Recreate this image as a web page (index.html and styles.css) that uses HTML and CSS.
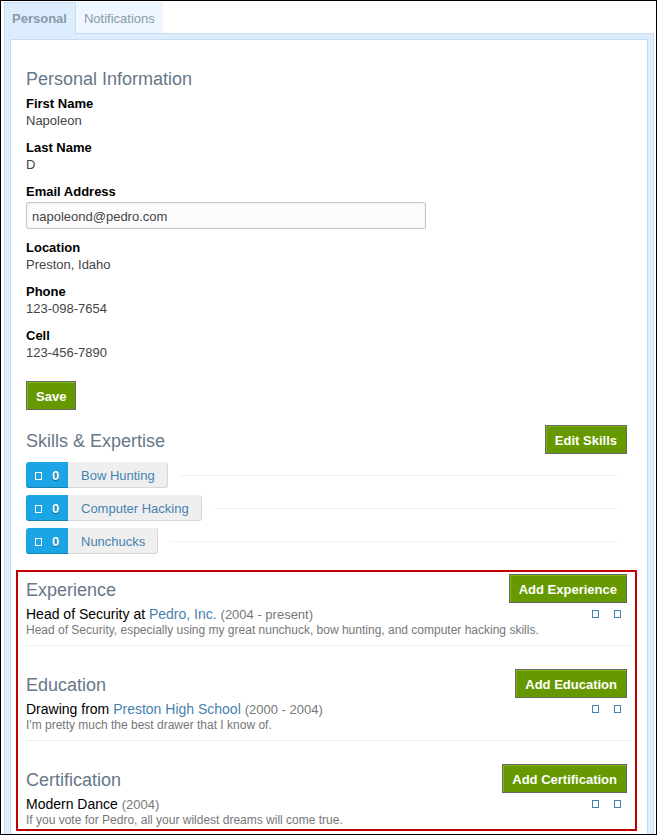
FILE: index.html
```html
<!DOCTYPE html>
<html lang="en">
<head>
<meta charset="utf-8">
<title>Personal profile</title>
<link rel="stylesheet" href="styles.css">
</head>
<body>
<div class="page">
  <nav class="tabs">
    <a class="tab tab-active" href="#personal">Personal</a>
    <a class="tab" href="#notifications">Notifications</a>
  </nav>
  <main class="frame">
    <div class="panel">
      <form class="info">
        <h2>Personal Information</h2>
        <dl class="field"><dt>First Name</dt><dd>Napoleon</dd></dl>
        <dl class="field"><dt>Last Name</dt><dd>D</dd></dl>
        <div class="field">
          <label for="email">Email Address</label>
          <input id="email" type="text" value="napoleond@pedro.com">
        </div>
        <dl class="field"><dt>Location</dt><dd>Preston, Idaho</dd></dl>
        <dl class="field"><dt>Phone</dt><dd>123-098-7654</dd></dl>
        <dl class="field"><dt>Cell</dt><dd>123-456-7890</dd></dl>
        <button class="btn save" type="button">Save</button>
      </form>

      <section class="skills">
        <header class="head"><h2>Skills &amp; Expertise</h2><button class="btn" type="button">Edit Skills</button></header>
        <ul class="skill-list">
          <li class="skill"><span class="count"><svg class="glyph" viewBox="0 0 7 8"><rect x=".5" y=".5" width="6" height="7"/></svg>0</span><a class="skill-name" href="#bow">Bow Hunting</a></li>
          <li class="skill"><span class="count"><svg class="glyph" viewBox="0 0 7 8"><rect x=".5" y=".5" width="6" height="7"/></svg>0</span><a class="skill-name" href="#hacking">Computer Hacking</a></li>
          <li class="skill"><span class="count"><svg class="glyph" viewBox="0 0 7 8"><rect x=".5" y=".5" width="6" height="7"/></svg>0</span><a class="skill-name" href="#nunchucks">Nunchucks</a></li>
        </ul>
      </section>

      <div class="history">
        <section class="entry">
          <header class="head"><h2>Experience</h2><button class="btn" type="button">Add Experience</button></header>
          <div class="row">
            <h3>Head of Security at <a href="#pedro">Pedro, Inc.</a> <small>(2004 - present)</small></h3>
            <button class="tool" type="button" aria-label="Edit"><svg class="glyph" viewBox="0 0 7 8"><rect x=".5" y=".5" width="6" height="7"/></svg></button>
            <button class="tool" type="button" aria-label="Delete"><svg class="glyph" viewBox="0 0 7 8"><rect x=".5" y=".5" width="6" height="7"/></svg></button>
          </div>
          <p>Head of Security, especially using my great nunchuck, bow hunting, and computer hacking skills.</p>
        </section>
        <section class="entry">
          <header class="head"><h2>Education</h2><button class="btn" type="button">Add Education</button></header>
          <div class="row">
            <h3>Drawing from <a href="#school">Preston High School</a> <small>(2000 - 2004)</small></h3>
            <button class="tool" type="button" aria-label="Edit"><svg class="glyph" viewBox="0 0 7 8"><rect x=".5" y=".5" width="6" height="7"/></svg></button>
            <button class="tool" type="button" aria-label="Delete"><svg class="glyph" viewBox="0 0 7 8"><rect x=".5" y=".5" width="6" height="7"/></svg></button>
          </div>
          <p>I'm pretty much the best drawer that I know of.</p>
        </section>
        <section class="entry">
          <header class="head"><h2>Certification</h2><button class="btn" type="button">Add Certification</button></header>
          <div class="row">
            <h3>Modern Dance <small>(2004)</small></h3>
            <button class="tool" type="button" aria-label="Edit"><svg class="glyph" viewBox="0 0 7 8"><rect x=".5" y=".5" width="6" height="7"/></svg></button>
            <button class="tool" type="button" aria-label="Delete"><svg class="glyph" viewBox="0 0 7 8"><rect x=".5" y=".5" width="6" height="7"/></svg></button>
          </div>
          <p>If you vote for Pedro, all your wildest dreams will come true.</p>
        </section>
      </div>
    </div>
  </main>
</div>
</body>
</html>
```
FILE: styles.css
```css
* { box-sizing: border-box; }
body {
  margin: 0;
  background: #fff;
  color: #444;
  font: 13px/17px "Liberation Sans", Arial, sans-serif;
}
h2, h3, p, dl, dd, ul { margin: 0; padding: 0; font-weight: normal; }
a { color: #4682b0; text-decoration: none; }
button { font: inherit; cursor: pointer; }

.page { border: 1px solid #000; padding: 1px 2px 0 3px; }

.tabs { display: flex; }
.tab {
  padding: 8px 8px 6px;
  background: #eef7ff;
  color: #8899a8;
}
.tab-active {
  position: relative;
  margin-bottom: -1px;
  padding: 7px 8px 7px 7px;
  border: 1px solid #c8dcf0;
  border-bottom: 0;
  background: #dcedfe;
  font-weight: bold;
}

.frame {
  padding: 5px 5px 0;
  border: 1px solid #c8dcf0;
  border-bottom: 0;
  background: #dcedfe;
}
.panel {
  padding: 27px 10px 3px 5px;
  border: 1px solid #c8dcf0;
  border-bottom: 0;
  background: #fff;
}

h2 { color: #667788; font-size: 18px; line-height: 24px; }

.info { padding: 0 10px; }
.info h2 { margin-bottom: 4px; }
.field { margin-bottom: 10px; }
.field dt, .field label { display: block; color: #000; font-weight: bold; }
.field input {
  display: block;
  width: 100%;
  max-width: 400px;
  height: 27px;
  margin-top: 2px;
  padding: 1px 5px 0;
  border: 1px solid #c8c8c8;
  border-radius: 2px;
  background: #fcfcfc;
  box-shadow: inset 0 0 3px #e4e4e4;
  color: #444;
  font: inherit;
}

.btn {
  flex: none;
  height: 29px;
  padding: 2px 9px 0;
  border: 1px solid #666;
  border-radius: 0;
  background: #690;
  box-shadow: inset 1px 1px #7fb80a;
  color: #fff;
  font-weight: bold;
}
.save { display: block; margin-top: 20px; }

.head { display: flex; align-items: center; justify-content: space-between; }
.head h2 { padding-top: 2px; }

.skills { margin-top: 15px; padding: 0 10px; }
.skill-list { display: grid; gap: 7px; padding: 8px 10px 0 0; list-style: none; }
.skill { display: flex; align-items: center; }
.skill::after {
  content: "";
  flex: 1;
  margin-left: 12px;
  border-top: 1px solid #f2f2f2;
}
.count {
  display: flex;
  align-items: center;
  gap: 10px;
  width: 42px;
  height: 26px;
  padding: 2px 0 0 9px;
  border-bottom: 1px solid #1580b4;
  border-radius: 3px 0 0 3px;
  background: #1ca5e4;
  color: #fff;
  font-weight: bold;
  text-shadow: 0 1px 1px #0b5f8a;
}
.skill-name {
  height: 26px;
  padding: 0 12px 0 13px;
  border: solid #d8d8d8;
  border-width: 0 1px 1px 0;
  border-radius: 0 3px 3px 0;
  background: #efefef;
  line-height: 27px;
}
.glyph { display: block; width: 7px; height: 8px; fill: none; stroke: currentColor; }

.history { margin-top: 16px; padding: 2px 3px 1px 8px; border: 2px solid #c00000; }
.entry .head { padding-right: 5px; }
.entry + .entry { margin-top: 23px; }
.entry:not(:last-child) { padding-bottom: 7px; border-bottom: 1px solid #eee; }
.row { display: flex; align-items: center; gap: 7px; margin-top: 3px; padding-right: 7px; }
.row h3 { flex: 1; color: #000; font-size: 14px; line-height: 17px; }
.row small { color: #777; font-size: 13px; }
.tool { padding: 0 4px 1px; border: 0; background: none; color: #4682b0; }
.entry p { color: #777; font-size: 12px; line-height: 15px; }
```
